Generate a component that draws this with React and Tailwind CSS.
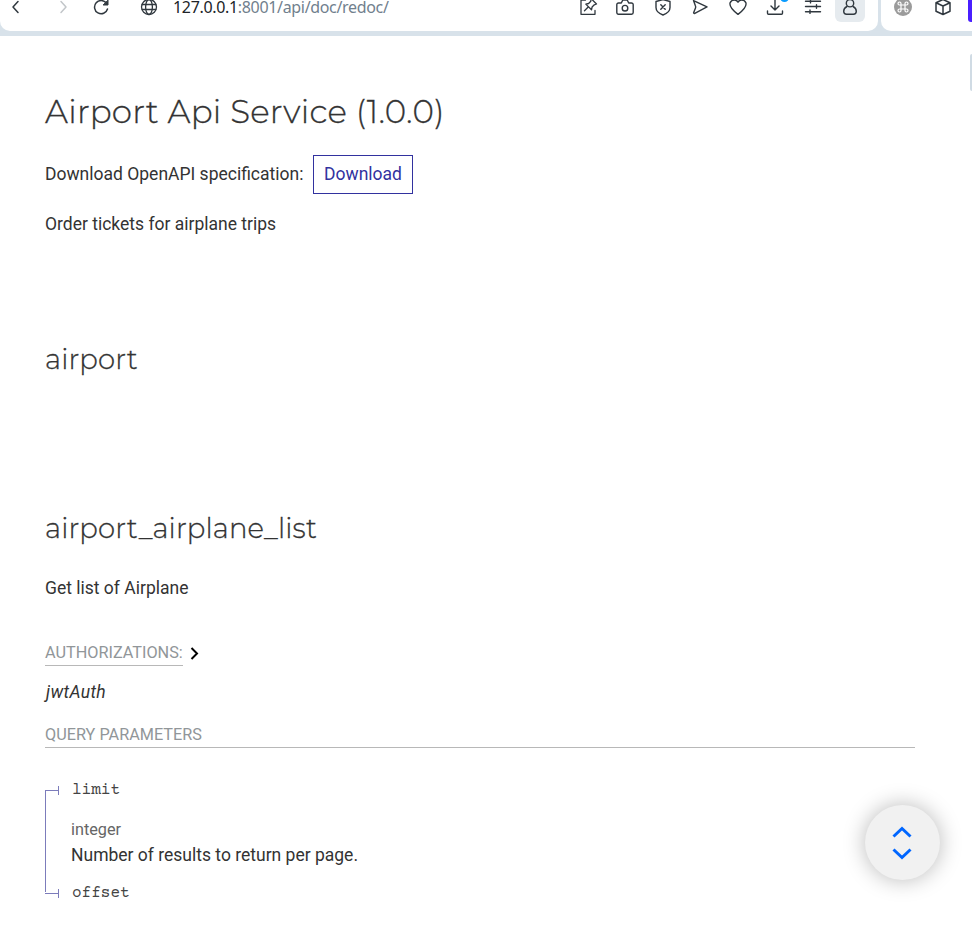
import React from "react";

function Icon({ children, className = "", size = 20, sw = 1.5 }) {
  return (
    <svg
      width={size}
      height={size}
      viewBox="0 0 20 20"
      fill="none"
      stroke="currentColor"
      strokeWidth={sw}
      strokeLinecap="round"
      strokeLinejoin="round"
      className={`shrink-0 ${className}`}
    >
      {children}
    </svg>
  );
}

function NavBar() {
  return (
    <div className="flex h-[36px] overflow-hidden bg-[#d8e2ea] pb-[5px] text-[#30383f]">
      <div className="flex h-[31px] w-[878px] shrink-0 rounded-b-[10px] bg-white pl-[5px]">
        <div className="-mt-[8px] flex h-[30px] items-center">
          <Icon><path d="M13 4.500 8 10l5 5.500" /></Icon>
          <Icon className="ml-[28px] text-[#c2c6c9]"><path d="m8 4.500 5 5.500-5 5.500" /></Icon>
          <Icon className="ml-[18px]">
            <path d="M15.500 6.300A6.600 6.600 0 1 0 16.500 12" />
            <path d="M17 3.500v4.500h-4.500z" fill="currentColor" strokeWidth="1" />
          </Icon>
          <Icon className="ml-[28px]" sw={1.3}>
            <circle cx="10" cy="10" r="7.500" />
            <ellipse cx="10" cy="10" rx="3.400" ry="7.500" />
            <path d="M3.300 7.500h13.400M3.300 12.500h13.400" />
          </Icon>
          <div className="ml-[14px] w-[217px] whitespace-nowrap font-['Noto_Sans','Open_Sans',sans-serif] text-[16px] leading-[30px] tracking-[-0.33px] text-[#202428]">
            127.0.0.1<span className="text-[#71808d]">:8001/api/doc/redoc/</span>
          </div>
          <div className="ml-[188px] flex items-center gap-[17.500px]">
            <Icon sw={1.3}>
              <path d="M7.500 3H3v14.300h14V13.500" />
              <path d="M13 1.500 18.500 7l-2.200.8-2.200 2.200-.6 2.800L7.800 7.100l2.800-.6 2.200-2.200zM10.200 10l-3.700 3.700" />
            </Icon>
            <Icon sw={1.4} className="-ml-[1px]">
              <path d="M3.500 6h2.800l1.500-3h4.400l1.500 3h2.800a1.700 1.700 0 0 1 1.700 1.700v7.700a1.800 1.800 0 0 1-1.700 1.800h-13a1.700 1.700 0 0 1-1.700-1.800v-7.700a1.700 1.700 0 0 1 1.700-1.700z" />
              <circle cx="10" cy="11.200" r="2.800" />
            </Icon>
            <Icon sw={1.4} className="ml-[1px]">
              <path d="M10 2.500 17 4.500v6c0 3.500-3 6-7 7.500-4-1.500-7-4-7-7.500v-6z" />
              <path d="m7.800 7.800 4.400 4.400m0-4.400-4.400 4.400" />
            </Icon>
            <Icon sw={1.4} className="-ml-[1px]">
              <path d="M3.500 3.600 17 9.900 4.800 16.400c-.7.400-1.400-.2-1.100-1l1.700-4.200c.4-.9.400-1.500 0-2.400z" />
            </Icon>
            <Icon sw={1.4} className="ml-[1px]">
              <path d="M10 5.200C8.400 2.200 3.800 2.200 2.200 5.600 1 9 3.500 12.500 10 17.400c6.500-4.900 9-8.400 7.800-11.800C16.200 2.200 11.600 2.200 10 5.200z" />
            </Icon>
            <div className="relative -ml-[1px] h-[20px] w-[20px]">
              <Icon sw={1.4}>
                <path d="M10 2v11m-4-4 4 4 4-4M2.500 14v2.300q0 1 1 1h13q1 0 1-1V14" />
              </Icon>
              <span className="absolute -top-[4px] left-[15px] h-[9px] w-[9px] rounded-full bg-[#0a9cff]" />
            </div>
            <Icon sw={1.400} className="ml-[1px]">
              <path d="M2.500 4.200h15M2.500 9.500h15M2.500 14.700h15M7.500 2.500v3.400M13.500 7.800v3.400M7 13v3.400" />
            </Icon>
            <div className="-ml-[5.500px] flex h-[30px] w-[30px] items-center justify-center rounded-[6px] bg-[#e6ebef]">
              <Icon sw={1.4}>
                <circle cx="10" cy="6.200" r="3.700" />
                <path d="M7 9.500c-2.100 1-3.300 2.800-3.300 4.700 0 2 1.300 3 2.900 3h6.800c1.600 0 2.900-1 2.900-3 0-1.900-1.200-3.700-3.300-4.700" />
              </Icon>
            </div>
          </div>
        </div>
      </div>
      <div className="ml-[3px] flex h-[31px] w-[100px] shrink-0 rounded-bl-[10px] bg-white pl-[12px]">
        <div className="-mt-[8px] flex h-[30px] items-center">
          <Icon>
            <circle cx="10" cy="10" r="9" fill="#9b9b9b" stroke="none" />
            <path
              stroke="#fff"
              strokeWidth="1.200"
              d="M8 8h4v4H8zM8 8H6.500A1.500 1.500 0 1 1 8 6.500zM12 8V6.500A1.500 1.500 0 1 1 13.500 8zM12 12h1.500a1.500 1.500 0 1 1-1.500 1.500zM8 12v1.500A1.500 1.500 0 1 1 6.500 12z"
            />
          </Icon>
          <Icon className="ml-[20px]">
            <path d="m10 2.500 7 3.200v8.500l-7 3.300-7-3.300V5.700zM3 5.700 10 9l7-3.300M10 9v8.500" />
          </Icon>
          <div className="ml-[15px] h-[29px] w-[20px] rounded-[3px] bg-[#4a1fff]" />
        </div>
      </div>
    </div>
  );
}

function Param({ name }) {
  return (
    <div className="flex h-[20px] items-center">
      <span className="h-[1px] w-[13px] bg-[#7c7cbb]" />
      <span className="h-[9px] w-[1px] bg-[#7c7cbb]" />
      <span className="ml-[13px] font-['Courier_Prime','Liberation_Mono',monospace] text-[16px] leading-[20px] text-[#444]">{name}</span>
    </div>
  );
}

function ScrollButton() {
  return (
    <div className="absolute left-[865px] top-[805px] flex h-[75px] w-[75px] items-center justify-center rounded-full bg-[#f1f1f1] pr-[2px] shadow-[0_0_22px_rgba(0,0,0,0.28)]">
      <svg width="20" height="36" viewBox="0 0 20 36" fill="none" stroke="#0066ff" strokeWidth="3">
        <path d="m1.500 11.500 8.500-8 8.500 8M1.500 24.500l8.500 8 8.500-8" />
      </svg>
    </div>
  );
}

export default function App() {
  return (
    <div className="relative h-[926px] w-[972px] overflow-hidden bg-white font-['Roboto',sans-serif] text-[17.500px] text-[#333]">
      <NavBar />
      <main className="flex flex-col pl-[45px]">
        <h1 className="mt-[54px] h-[44px] whitespace-nowrap font-['Montserrat','Inter',sans-serif] text-[32.500px] font-light leading-[44px] tracking-[0.24px] [-webkit-text-stroke:0.3px_#333]">
          Airport Api Service (1.0.0)
        </h1>
        <div className="mt-[21px] flex h-[39px] items-center whitespace-nowrap">
          <span className="w-[259px]">Download OpenAPI specification:</span>
          <a className="ml-[9px] flex h-[39px] w-[100px] items-center justify-center border border-[#32329f] text-[#32329f]">
            Download
          </a>
        </div>
        <p className="mt-[17px] leading-[26px]">Order tickets for airplane trips</p>
        <h2 className="mt-[100px] font-['Montserrat','Inter',sans-serif] text-[27.500px] font-light leading-[44px] tracking-[0.16px] [-webkit-text-stroke:0.3px_#333]">airport</h2>
        <h2 className="mt-[125px] font-['Montserrat','Inter',sans-serif] text-[27.500px] font-light leading-[44px] tracking-[0.16px] [-webkit-text-stroke:0.3px_#333]">
          airport_airplane_list
        </h2>
        <p className="mt-[25px] leading-[26px]">Get list of Airplane</p>
        <div className="mt-[38px] flex h-[27px] items-center">
          <span className="h-[27px] border-b border-[#b8b8b8] text-[16.250px] leading-[27px] text-[#919699]">AUTHORIZATIONS:</span>
          <svg className="ml-[7px]" width="10" height="14" viewBox="0 0 10 14" fill="none" stroke="#000" strokeWidth="2">
            <path d="m1.500 2 5.500 5.500L1.500 13" />
          </svg>
        </div>
        <p className="mt-[13px] pl-[1px] italic leading-[26px] tracking-[0.35px]">jwtAuth</p>
        <h5 className="mt-[16px] h-[27px] w-[870px] border-b border-[#b8b8b8] text-[16.250px] leading-[27px] text-[#919699]">
          QUERY PARAMETERS
        </h5>
        <div className="mt-[32px] flex flex-col">
          <Param name="limit" />
          <div className="-my-[9px] h-[101px] w-[320px] border-l border-[#7c7cbb] pl-[25px] pt-[26px]">
            <p className="text-[16.250px] leading-[26px] text-[#666]">integer</p>
            <p className="leading-[25px]">Number of results to return per page.</p>
          </div>
          <Param name="offset" />
        </div>
      </main>
      <span className="absolute left-[970px] top-[54px] h-[37px] w-[4px] rounded-[2px] bg-[#d0dbe4]" />
      <ScrollButton />
    </div>
  );
}
